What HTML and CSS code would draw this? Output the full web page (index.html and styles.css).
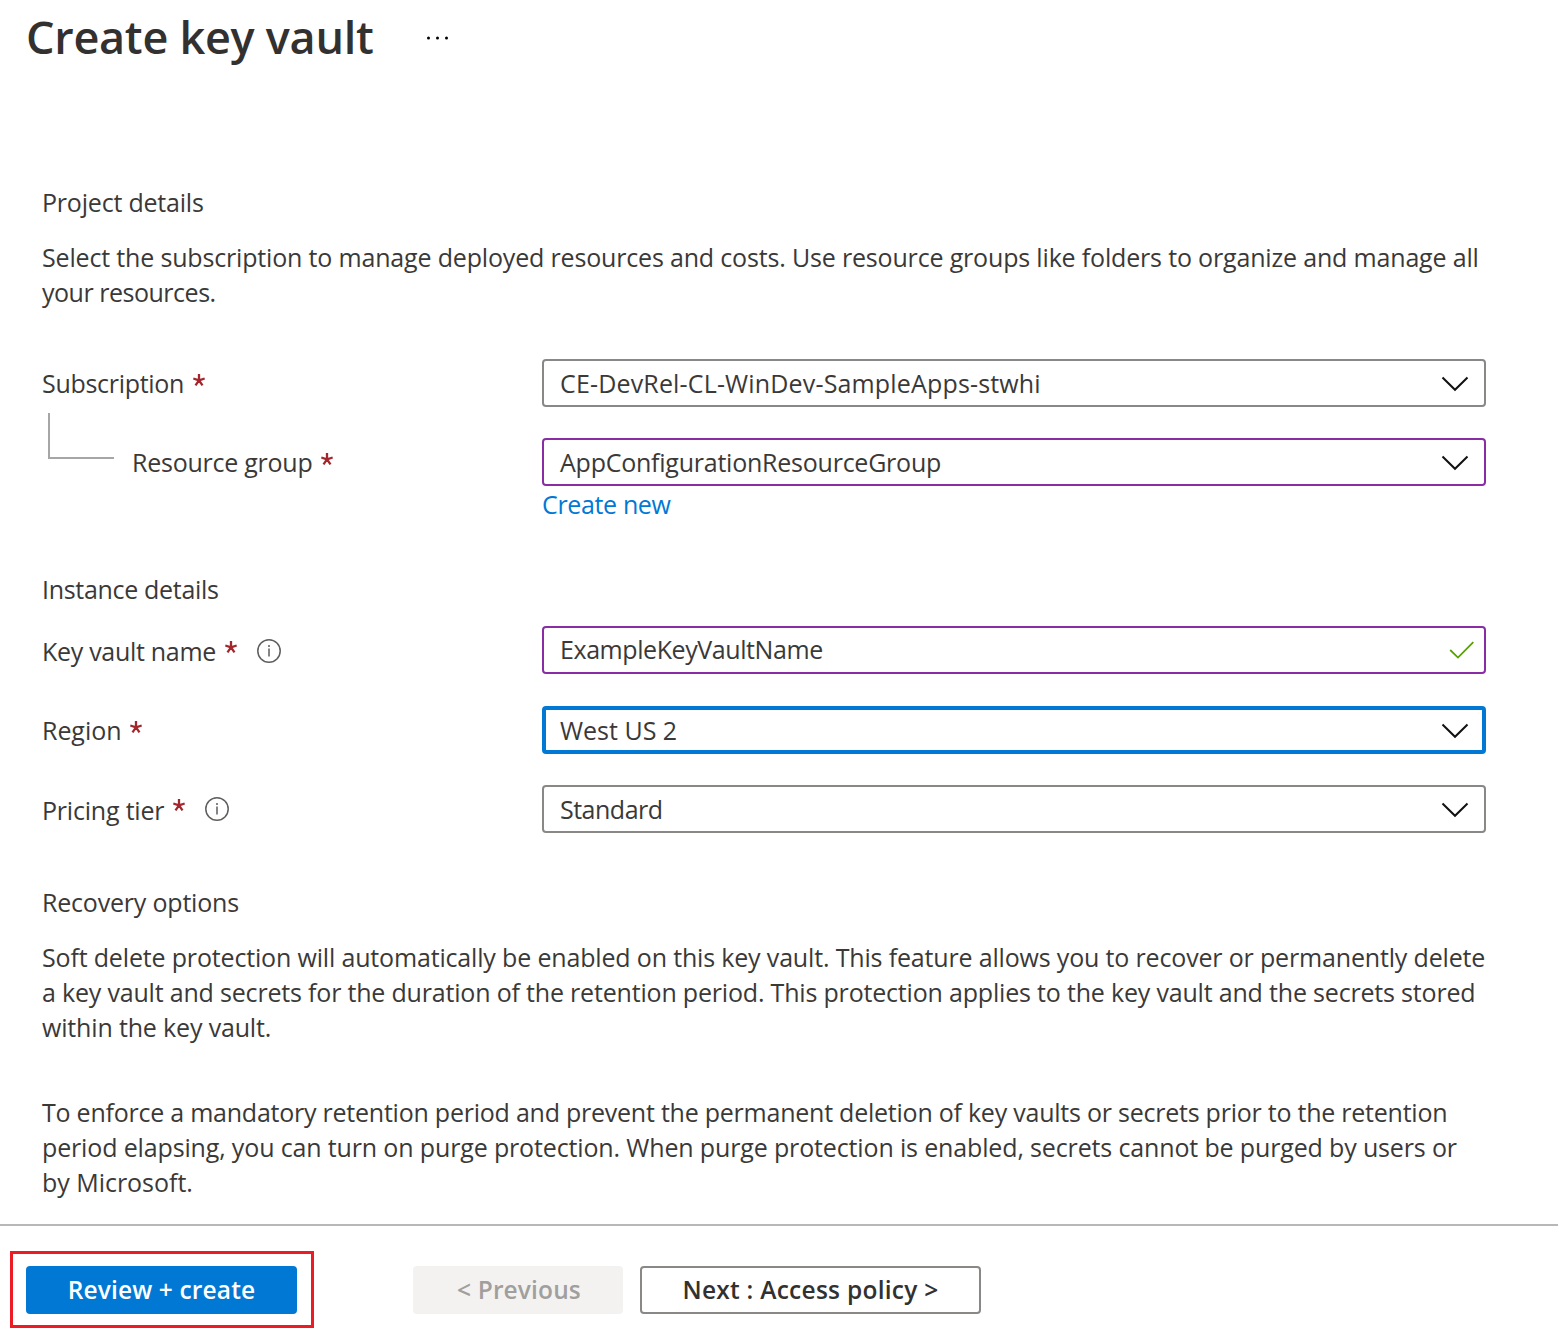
FILE: index.html
```html
<!DOCTYPE html>
<html lang="en">
<head>
<meta charset="utf-8">
<title>Create key vault</title>
<link rel="stylesheet" href="styles.css">
</head>
<body>
<svg class="sprite" aria-hidden="true">
  <symbol id="chevron" viewBox="0 0 28 16"><path d="M1.5 1.5 14 13.8 26.5 1.5" fill="none" stroke="currentColor" stroke-width="2"/></symbol>
  <symbol id="check" viewBox="0 0 26 20"><path d="M1.2 10 9 17.6 24.3 2.2" fill="none" stroke="currentColor" stroke-width="1.8"/></symbol>
  <symbol id="info" viewBox="0 0 24 24"><circle cx="12" cy="12" r="11.2" fill="none" stroke="currentColor" stroke-width="1.5"/><path d="M12 9.6V17.6M12 6V7.9" stroke="currentColor" stroke-width="1.5"/></symbol>
  <symbol id="required" viewBox="0 0 12 12"><path d="M6 6.3V0M6 6.3 .3 4.5M6 6.3 11.7 4.5M6 6.3 2.5 11.3M6 6.3 9.5 11.3" fill="none" stroke="currentColor" stroke-width="2.3"/></symbol>
</svg>
<div class="page">
  <header class="header">
    <h1 class="title">Create key vault</h1>
    <svg class="more" viewBox="0 0 24 4"><circle cx="2.5" cy="2" r="1.5"/><circle cx="11.5" cy="2" r="1.5"/><circle cx="20.5" cy="2" r="1.5"/></svg>
  </header>
  <main class="content">
    <section class="section">
      <h2 class="heading">Project details</h2>
      <p class="text"><span class="line intro-1">Select the subscription to manage deployed resources and costs. Use resource groups like folders to organize and manage all</span> <span class="line intro-2">your resources.</span></p>
      <div class="fields project">
        <div class="row">
          <div class="label"><span class="subscription">Subscription</span><svg class="required"><use href="#required"/></svg></div>
          <div class="field"><span class="subscription-value">CE-DevRel-CL-WinDev-SampleApps-stwhi</span><svg class="chevron"><use href="#chevron"/></svg></div>
        </div>
        <div class="row">
          <div class="label"><span class="branch"></span><span class="group">Resource group</span><svg class="required"><use href="#required"/></svg></div>
          <div class="field edited"><span class="group-value">AppConfigurationResourceGroup</span><svg class="chevron"><use href="#chevron"/></svg></div>
        </div>
      </div>
      <a class="create-new">Create new</a>
    </section>
    <section class="section instance">
      <h2 class="heading instance-heading">Instance details</h2>
      <div class="fields">
        <div class="row">
          <div class="label low"><span class="name">Key vault name</span><svg class="required"><use href="#required"/></svg><svg class="info info-name"><use href="#info"/></svg></div>
          <div class="field edited raised"><span class="name-value">ExampleKeyVaultName</span><svg class="check"><use href="#check"/></svg></div>
        </div>
        <div class="row region-row">
          <div class="label"><span class="region">Region</span><svg class="required"><use href="#required"/></svg></div>
          <div class="field focused"><span>West US 2</span><svg class="chevron"><use href="#chevron"/></svg></div>
        </div>
        <div class="row">
          <div class="label low"><span class="tier">Pricing tier</span><svg class="required required-tier"><use href="#required"/></svg><svg class="info"><use href="#info"/></svg></div>
          <div class="field"><span class="tier-value">Standard</span><svg class="chevron"><use href="#chevron"/></svg></div>
        </div>
      </div>
    </section>
    <section class="section recovery">
      <h2 class="heading">Recovery options</h2>
      <p class="text"><span class="line soft-1">Soft delete protection will automatically be enabled on this key vault. This feature allows you to recover or permanently delete</span> <span class="line soft-2">a key vault and secrets for the duration of the retention period. This protection applies to the key vault and the secrets stored</span> <span class="line soft-3">within the key vault.</span></p>
      <p class="text purge"><span class="line purge-1">To enforce a mandatory retention period and prevent the permanent deletion of key vaults or secrets prior to the retention</span> <span class="line purge-2">period elapsing, you can turn on purge protection. When purge protection is enabled, secrets cannot be purged by users or</span> <span class="line purge-3">by Microsoft.</span></p>
    </section>
  </main>
  <footer class="footer">
    <div class="callout"><button class="button primary">Review + create</button></div>
    <button class="button previous" disabled>&lt; Previous</button>
    <button class="button next">Next : Access policy &gt;</button>
  </footer>
</div>
</body>
</html>
```
FILE: styles.css
```css
* { box-sizing: border-box; }

body {
  margin: 0;
  background: #fff;
  color: #3a3938;
  font: 400 25px/35px "Open Sans", sans-serif;
}

h1, h2, p { margin: 0; }
svg { display: block; flex: none; }
.sprite { display: none; }

.page {
  display: flex;
  flex-direction: column;
  width: 1558px;
  height: 1344px;
  overflow: hidden;
}

/* Header */
.header {
  display: flex;
  align-items: flex-start;
  height: 185px;
  padding: 6px 0 0 26px;
}
.title {
  width: 399px;
  color: #323130;
  font-size: 45px;
  font-weight: 600;
  line-height: 62px;
  letter-spacing: -0.276px;
}
.more { width: 24px; height: 4px; margin: 30px 0 0 1px; fill: #000; }

/* Sections */
.content { height: 1039px; padding-left: 42px; }
.heading {
  font-size: 25px;
  font-weight: 400;
  line-height: 35px;
  letter-spacing: -0.2px;
}
.instance-heading { letter-spacing: -0.31px; }
.text { margin-top: 20px; }
.line { display: block; white-space: nowrap; }
.instance { margin-top: 50px; }
.recovery { margin-top: 52px; }
.purge { margin-top: 50px; }

/* Form rows */
.fields { display: flex; flex-direction: column; gap: 31px; margin-top: 19px; }
.project { margin-top: 49px; }
.region-row { margin-top: 1px; }
.row { display: grid; grid-template-columns: 500px 944px; height: 48px; }
.label { display: flex; align-items: center; padding-top: 1px; white-space: nowrap; }
.label.low { padding-top: 3px; }
.required { width: 12px; height: 12px; margin: -7px 0 0 9px; color: #a4262c; }
.label.low .required { margin-top: -10px; }
.label.low .required-tier { margin-top: -11px; }
.info { width: 24px; height: 24px; margin: -3px 0 0 20px; color: #605e5c; }
.info-name { margin-top: -1px; }
.branch {
  flex: none;
  width: 66px;
  height: 46px;
  margin: -54px 18px 0 6px;
  border: solid #a6a6a6;
  border-width: 0 0 2px 2px;
}
.field {
  display: flex;
  align-items: center;
  justify-content: space-between;
  padding: 1px 15px 0 16px;
  border: 2px solid #8a8886;
  border-radius: 4px;
  white-space: nowrap;
}
.field.edited { border-color: #8a2da5; }
.field.raised { padding: 0 9px 1px 16px; }
.field.focused { padding: 1px 13px 0 14px; border: 4px solid #0078d4; }
.chevron { width: 28px; height: 16px; color: #111; }
.check { width: 26px; height: 20px; color: #57a300; }
.create-new {
  display: block;
  margin: 1px 0 0 500px;
  color: #0078d4;
  letter-spacing: -0.35px;
}

/* Footer */
.footer {
  display: flex;
  align-items: flex-start;
  height: 120px;
  padding: 25px 0 0 10px;
  border-top: 2px solid #b8b8b8;
}
.callout {
  width: 304px;
  height: 77px;
  padding: 12px 14px 11px 13px;
  border: 3px solid #ed1c24;
}
.button {
  display: block;
  height: 48px;
  padding: 0 0 2px;
  border: 0;
  border-radius: 4px;
  font: 600 24.5px/35px "Open Sans", sans-serif;
  letter-spacing: 0.14px;
  white-space: nowrap;
}
.primary { width: 271px; background: #0078d4; color: #fff; }
.previous {
  width: 210px;
  margin: 15px 0 0 99px;
  padding-left: 2px;
  background: #f3f2f1;
  color: #a19f9d;
}
.next {
  width: 341px;
  margin: 15px 0 0 17px;
  border: 2px solid #8a8886;
  background: #fff;
  color: #323130;
  letter-spacing: 0.26px;
}

/* Tracking per string */
.intro-1 { letter-spacing: -0.169px; }
.intro-2 { letter-spacing: -0.48px; }
.subscription { letter-spacing: -0.29px; }
.group { letter-spacing: -0.25px; }
.subscription-value { letter-spacing: 0.16px; }
.group-value { letter-spacing: -0.236px; }
.name { letter-spacing: -0.3px; }
.name-value { letter-spacing: -0.42px; }
.region { letter-spacing: -0.05px; }
.tier { letter-spacing: -0.2px; }
.tier-value { letter-spacing: -0.5px; }
.soft-1 { letter-spacing: -0.165px; }
.soft-2 { letter-spacing: -0.186px; }
.soft-3 { letter-spacing: -0.16px; }
.purge-1 { letter-spacing: -0.235px; }
.purge-2 { letter-spacing: -0.144px; }
.purge-3 { letter-spacing: -0.03px; }
```
